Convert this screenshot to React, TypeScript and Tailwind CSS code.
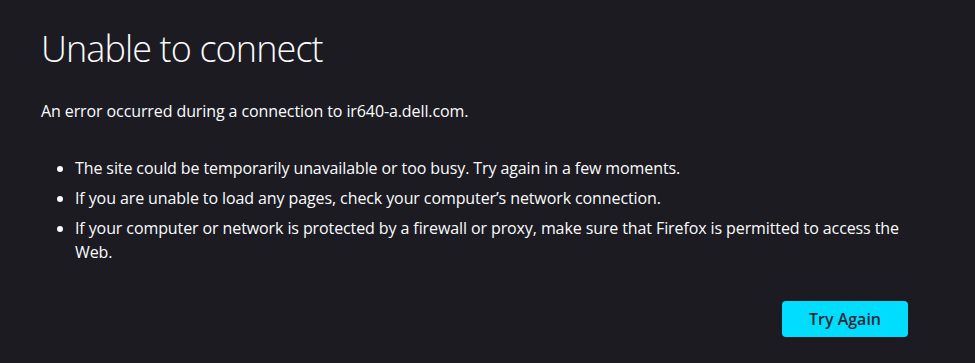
export default function App() {
  return (
    <div className="w-[975px] h-[363px] bg-[#1c1b22] text-[#fbfbfe] overflow-hidden" style={{ fontFamily: '"Open Sans", sans-serif' }}>
      <div className="pl-[41px] pt-[24px] w-[916px]">
        <h1 className="text-[36px] font-light leading-[50px] tracking-[-0.9px]">Unable to connect</h1>
        <p className="mt-[25px] text-[16px] leading-[24px] tracking-[-0.1px]">An error occurred during a connection to ir640-a.dell.com.</p>
        <ul className="mt-[33px] pl-[34px] list-disc text-[16px] leading-[24px] tracking-[-0.1px] flex flex-col gap-[6px]">
          <li>The site could be temporarily unavailable or too busy. Try again in a few moments.</li>
          <li>If you are unable to load any pages, check your computer’s network connection.</li>
          <li>If your computer or network is protected by a firewall or proxy, make sure that Firefox is permitted to access the Web.</li>
        </ul>
        <div className="flex justify-end mt-[37px]">
          <button className="w-[126px] h-[36px] rounded-[4px] bg-[#00ddff] text-[#2b2a33] text-[16px] font-semibold mr-[8px]">Try Again</button>
        </div>
      </div>
    </div>
  );
}
